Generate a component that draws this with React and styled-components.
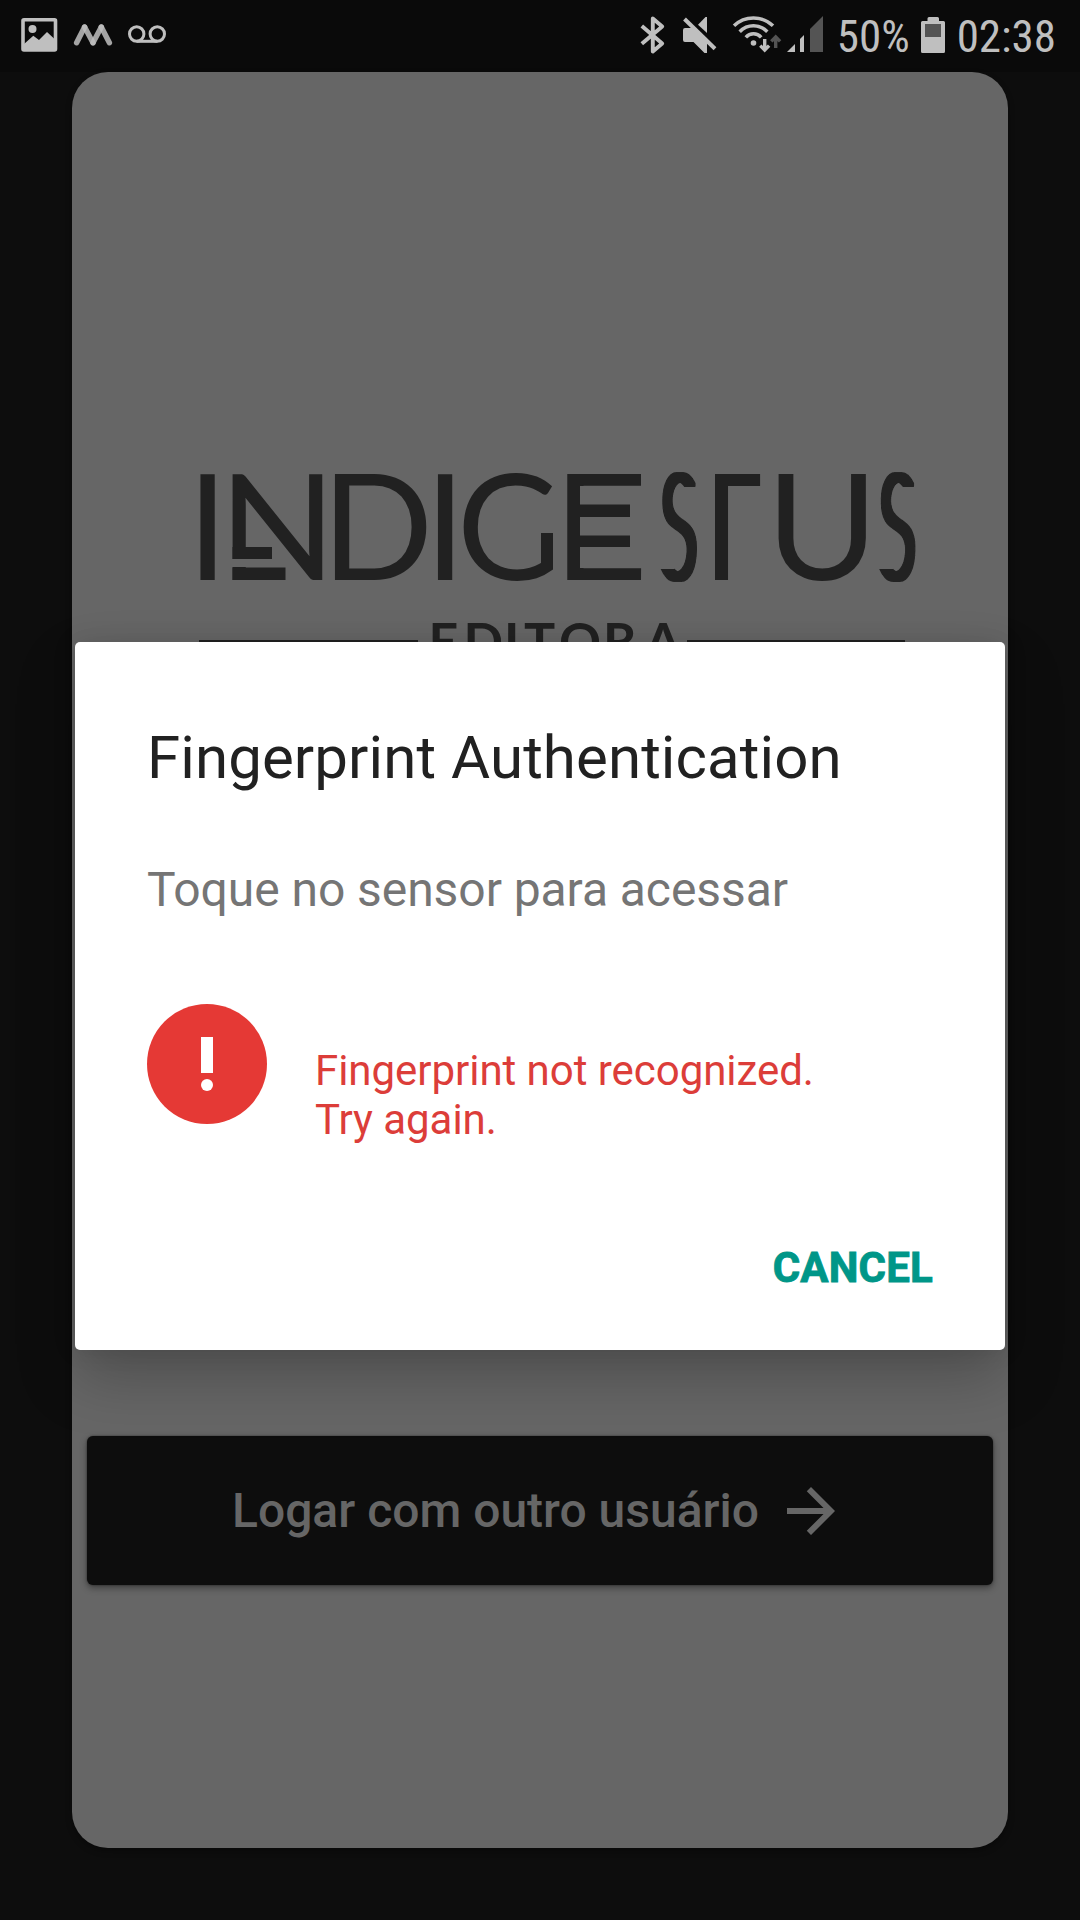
import React from "react";
import styled, { createGlobalStyle } from "styled-components";

const GlobalStyle = createGlobalStyle`
  *, *::before, *::after { box-sizing: border-box; }
  body {
    margin: 0;
    background: #0d0d0d;
    font-family: Roboto, "Noto Sans", sans-serif;
  }
`;

const Screen = styled.div`
  position: relative;
  display: flex;
  flex-direction: column;
  width: 1080px;
  height: 1920px;
  overflow: hidden;
  background: #0d0d0d;
`;

const StatusBar = styled.header`
  display: flex;
  justify-content: space-between;
  flex: none;
  height: 72px;
  padding: 0 24px 0 20px;
  background: #0a0a0a;
`;

const StatusGroup = styled.div`
  display: flex;
  align-items: center;
`;

const StatusText = styled.span`
  margin-left: ${(p) => p.$gap}px;
  padding-top: 2px;
  color: #bfbfbf;
  font: 400 45px/70px "Roboto Condensed", Roboto, sans-serif;
  white-space: nowrap;
`;

const StatusIcon = styled.svg`
  display: block;
  flex: none;
  width: ${(p) => p.$w}px;
  height: 72px;
  margin-left: ${(p) => p.$gap || 0}px;
`;

const Card = styled.main`
  display: flex;
  flex-direction: column;
  flex: none;
  height: 1776px;
  margin: 0 72px;
  padding: 338px 15px 0;
  border-radius: 36px;
  background: #666;
  box-shadow: 0 3px 6px rgba(0, 0, 0, 0.35);
`;

const LogoArt = styled.svg`
  display: block;
  flex: none;
  width: 760px;
  height: 260px;
  margin-left: 93px;
  font-family: Lato, sans-serif;
  font-size: 147px;
  fill: #212121;
`;

const LoginButton = styled.button`
  display: flex;
  align-items: center;
  justify-content: center;
  gap: 16px;
  flex: none;
  height: 149px;
  margin-top: 766px;
  padding: 0 1px 0 0;
  border: 0;
  border-radius: 6px;
  background: #0d0d0d;
  color: #666;
  font: 500 48px/56px Roboto, sans-serif;
  box-shadow: 0 3px 7px rgba(0, 0, 0, 0.4), 0 0 2px rgba(0, 0, 0, 0.5);
`;

const ArrowIcon = styled.svg`
  display: block;
  width: 72px;
  height: 72px;
  fill: currentColor;
`;

const Overlay = styled.div`
  position: absolute;
  inset: 72px 0 0;
  display: flex;
  align-items: center;
  justify-content: center;
`;

const Dialog = styled.section`
  display: flex;
  flex-direction: column;
  width: 930px;
  height: 708px;
  padding: 81px 72px 0;
  border-radius: 5px;
  background: #fff;
  box-shadow: 0 28px 60px rgba(0, 0, 0, 0.23), 0 0 24px rgba(0, 0, 0, 0.1);
`;

const Title = styled.h1`
  margin: 0;
  color: #212121;
  font-size: 60px;
  font-weight: 400;
  line-height: 70px;
  letter-spacing: 0.09px;
`;

const Message = styled.p`
  margin: 69px 0 0;
  color: #757575;
  font-size: 48px;
  line-height: 56px;
  letter-spacing: -0.06px;
`;

const Status = styled.div`
  display: flex;
  align-items: flex-start;
  margin-top: 86px;
`;

const ErrorIcon = styled.svg`
  display: block;
  flex: none;
  width: 120px;
  height: 120px;
`;

const StatusMessage = styled.p`
  width: 560px;
  margin: 42px 0 0 48px;
  color: #dc3d39;
  font-size: 42px;
  line-height: 49px;
  letter-spacing: -0.04px;
`;

const Actions = styled.div`
  display: flex;
  justify-content: flex-end;
  margin-top: 99px;
`;

const CancelButton = styled.button`
  padding: 0;
  border: 0;
  background: none;
  color: #009688;
  font: 700 42px/50px Roboto, sans-serif;
  letter-spacing: 0.2px;
  -webkit-text-stroke: 0.9px #009688;
`;

function Glyph({ x, y = 580, scale = 1, children, ...rest }) {
  return (
    <text transform={`translate(${x} ${y}) scale(${scale} 1)`} {...rest}>
      {children}
    </text>
  );
}

function NarrowS({ x }) {
  return (
    <>
      <g filter="url(#widen)">
        <Glyph x={x} y={579} scale={0.47} fontSize="146" fontWeight="300" stroke="#212121" strokeWidth="2">
          S
        </Glyph>
      </g>
      <rect x={x + 23} y="487" width="17" height="20" fill="#666" />
      <rect x={x - 4} y="547" width="18" height="22" fill="#666" />
    </>
  );
}

function Logo() {
  return (
    <LogoArt viewBox="180 410 760 260" aria-label="Indigestus Editora">
      <defs>
        <clipPath id="right-arm">
          <rect x="715" y="460" width="60" height="130" />
        </clipPath>
        <filter id="widen" x="-30%" y="-10%" width="160%" height="120%">
          <feMorphology operator="dilate" radius="3 1" />
        </filter>
      </defs>
      <Glyph x={187}>I</Glyph>
      <Glyph x={218.5} scale={1.05}>N</Glyph>
      <rect x="229" y="559" width="22" height="8" fill="#666" />
      <rect x="232.5" y="547" width="39.5" height="12" />
      <rect x="232.5" y="567.5" width="53" height="12.5" />
      <Glyph x={321.5}>D</Glyph>
      <Glyph x={424.5}>I</Glyph>
      <Glyph x={457} scale={0.97}>G</Glyph>
      <rect x="506" y="517" width="50" height="16" fill="#666" />
      <rect x="506" y="530" width="35" height="33" fill="#666" />
      <Glyph x={552} scale={1.136}>E</Glyph>
      <rect x="580" y="486" width="64" height="82" fill="#666" />
      <rect x="579" y="504.5" width="51" height="12.5" />
      <rect x="579" y="535.5" width="51" height="11.5" />
      <NarrowS x={660.5} />
      <g clipPath="url(#right-arm)">
        <Glyph x={680.6} scale={0.94}>T</Glyph>
      </g>
      <Glyph x={766} scale={1.04}>U</Glyph>
      <NarrowS x={879} />
      <text x="428.5 463.5 504 524 559 603 645" y="659.5" fontSize="52" fontWeight="700">
        EDITORA
      </text>
      <rect x="199" y="640" width="219" height="4" />
      <rect x="687" y="640" width="218" height="4" />
    </LogoArt>
  );
}

function Notifications() {
  return (
    <StatusGroup>
      <StatusIcon $w={38} viewBox="20 0 38 72">
        <rect x="23" y="19.8" width="32.5" height="30.2" rx="1" fill="none" stroke="#bfbfbf" strokeWidth="3.6" />
        <circle cx="32.5" cy="29" r="4" fill="#bfbfbf" />
        <path d="M24 44 33.3 35.8 39 40 47 32 54 38.5V50H24Z" fill="#bfbfbf" />
      </StatusIcon>
      <StatusIcon $w={40} $gap={15} viewBox="73 0 40 72" fill="none" stroke="#bfbfbf" strokeWidth="5.4" strokeLinecap="round">
        <path d="M76.6 42.8 84.6 27" strokeOpacity=".85" />
        <path d="M84.6 27 93 42.8" strokeOpacity=".85" />
        <path d="M93 42.8 101.3 27" strokeOpacity=".85" />
        <path d="M101.3 27 109.4 42.8" strokeOpacity=".85" />
      </StatusIcon>
      <StatusIcon $w={40} $gap={14} viewBox="127 0 40 72" fill="none" stroke="#bfbfbf" strokeWidth="3">
        <circle cx="136.7" cy="34" r="7.2" />
        <circle cx="157.3" cy="34" r="7.2" />
        <path d="M136.7 41.3H157.3" />
      </StatusIcon>
    </StatusGroup>
  );
}

function SystemStatus() {
  return (
    <StatusGroup>
      <StatusIcon $w={26} viewBox="640 0 26 72" fill="none" stroke="#bfbfbf" strokeWidth="3.9" strokeLinejoin="round">
        <path d="M641.8 26 662.2 43.5 652.8 51.5V18.5L662.2 26.5 641.8 43.8" />
      </StatusIcon>
      <StatusIcon $w={36} $gap={16} viewBox="682 0 36 72" fill="#bfbfbf">
        <path d="M685 28H693L707 42V53H704.5L693.5 42H685Q683 42 683 40V30Q683 28 685 28Z" />
        <path d="M698 24.8 705.5 17H707V33Z" />
        <path d="M684.5 19 715 48.8" stroke="#bfbfbf" strokeWidth="4" />
      </StatusIcon>
      <StatusIcon $w={50} $gap={14} viewBox="732 0 50 72" fill="none" stroke="#bfbfbf" strokeWidth="3.5">
        <path d="M734 25.8Q742 18 753.5 18Q765 18 773 25.8" />
        <path d="M739.7 31.7Q745.5 25.8 753.5 25.8Q761.5 25.8 767.3 31.7" />
        <path d="M745.8 37.3Q749 33.7 753.5 33.7Q758 33.7 761.2 37.3" />
        <circle cx="753.5" cy="43" r="2.8" fill="#bfbfbf" stroke="none" />
        <path d="M764.7 39V50M760.3 45.6 764.7 50 769.1 45.6" strokeWidth="3.4" />
        <path d="M775.7 48V37M771.3 41.4 775.7 37 780.1 41.4" stroke="#545454" strokeWidth="3.4" />
      </StatusIcon>
      <StatusIcon $w={38} $gap={4} viewBox="786 0 38 72" fill="#bfbfbf">
        <path d="M787 52 795 44V52Z" />
        <path d="M800 39 804 35V52H800Z" />
        <path d="M810 29 823 16V52H810Z" fill="#545454" />
      </StatusIcon>
      <StatusText $gap={13}>50%</StatusText>
      <StatusIcon $w={24} $gap={11} viewBox="921 0 24 72" fill="#bfbfbf">
        <path d="M922.5 21H927.5V18.5Q927.5 17 929 17H937.5Q939 17 939 18.5V21H943.5Q945 21 945 22.5V51.5Q945 53 943.5 53H922.5Q921 53 921 51.5V22.5Q921 21 922.5 21Z" />
        <rect x="925" y="24" width="16" height="13" fill="#545454" />
      </StatusIcon>
      <StatusText $gap={12}>02:38</StatusText>
    </StatusGroup>
  );
}

export default function App() {
  return (
    <Screen>
      <GlobalStyle />
      <StatusBar>
        <Notifications />
        <SystemStatus />
      </StatusBar>
      <Card>
        <Logo />
        <LoginButton>
          Logar com outro usuário
          <ArrowIcon viewBox="0 0 24 24">
            <path d="M12 4 10.59 5.41 16.17 11H4V13H16.17L10.59 18.59 12 20 20 12Z" />
          </ArrowIcon>
        </LoginButton>
      </Card>
      <Overlay>
        <Dialog role="dialog" aria-labelledby="dialog-title">
          <Title id="dialog-title">Fingerprint Authentication</Title>
          <Message>Toque no sensor para acessar</Message>
          <Status>
            <ErrorIcon viewBox="0 0 120 120">
              <circle cx="60" cy="60" r="60" fill="#e53935" />
              <rect x="54" y="33" width="12" height="36" fill="#fff" />
              <circle cx="60" cy="81" r="6" fill="#fff" />
            </ErrorIcon>
            <StatusMessage>
              Fingerprint not recognized.
              <br />
              Try again.
            </StatusMessage>
          </Status>
          <Actions>
            <CancelButton>CANCEL</CancelButton>
          </Actions>
        </Dialog>
      </Overlay>
    </Screen>
  );
}
